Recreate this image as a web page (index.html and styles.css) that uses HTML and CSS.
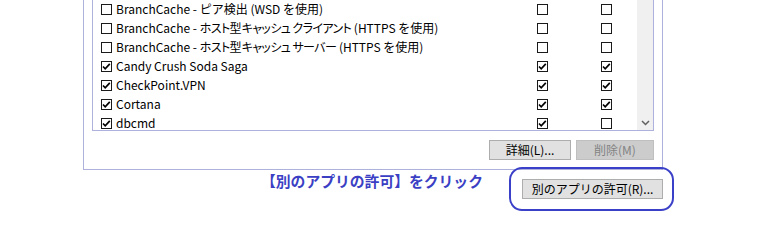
FILE: index.html
```html
<!DOCTYPE html>
<html lang="ja">
<head>
<meta charset="utf-8">
<link rel="stylesheet" href="styles.css">
</head>
<body>
<div class="page">
  <div class="panel">
    <div class="list">
      <div class="rows">
        <div class="row">
          <div class="name"><span class="cb"></span><span class="label">BranchCache - ピア検出 (WSD を使用)</span></div>
          <span class="cb"></span>
          <span class="cb"></span>
        </div>
        <div class="row">
          <div class="name"><span class="cb"></span><span class="label">BranchCache - <span class="kana">ホスト</span>型<span class="kana">キャッシュ クライアント</span> (HTTPS を使用)</span></div>
          <span class="cb"></span>
          <span class="cb"></span>
        </div>
        <div class="row">
          <div class="name"><span class="cb"></span><span class="label">BranchCache - <span class="kana">ホスト</span>型<span class="kana">キャッシュ サーバー</span> (HTTPS を使用)</span></div>
          <span class="cb"></span>
          <span class="cb"></span>
        </div>
        <div class="row">
          <div class="name"><span class="cb on"><svg viewBox="0 0 11 11"><path d="M2 5.5 L4.2 7.8 L8.8 2.8"/></svg></span><span class="label">Candy Crush Soda Saga</span></div>
          <span class="cb on"><svg viewBox="0 0 11 11"><path d="M2 5.5 L4.2 7.8 L8.8 2.8"/></svg></span>
          <span class="cb on"><svg viewBox="0 0 11 11"><path d="M2 5.5 L4.2 7.8 L8.8 2.8"/></svg></span>
        </div>
        <div class="row">
          <div class="name"><span class="cb on"><svg viewBox="0 0 11 11"><path d="M2 5.5 L4.2 7.8 L8.8 2.8"/></svg></span><span class="label">CheckPoint.VPN</span></div>
          <span class="cb on"><svg viewBox="0 0 11 11"><path d="M2 5.5 L4.2 7.8 L8.8 2.8"/></svg></span>
          <span class="cb on"><svg viewBox="0 0 11 11"><path d="M2 5.5 L4.2 7.8 L8.8 2.8"/></svg></span>
        </div>
        <div class="row">
          <div class="name"><span class="cb on"><svg viewBox="0 0 11 11"><path d="M2 5.5 L4.2 7.8 L8.8 2.8"/></svg></span><span class="label">Cortana</span></div>
          <span class="cb on"><svg viewBox="0 0 11 11"><path d="M2 5.5 L4.2 7.8 L8.8 2.8"/></svg></span>
          <span class="cb on"><svg viewBox="0 0 11 11"><path d="M2 5.5 L4.2 7.8 L8.8 2.8"/></svg></span>
        </div>
        <div class="row">
          <div class="name"><span class="cb on"><svg viewBox="0 0 11 11"><path d="M2 5.5 L4.2 7.8 L8.8 2.8"/></svg></span><span class="label">dbcmd</span></div>
          <span class="cb on"><svg viewBox="0 0 11 11"><path d="M2 5.5 L4.2 7.8 L8.8 2.8"/></svg></span>
          <span class="cb"></span>
        </div>
      </div>
      <div class="scrollbar">
        <svg class="chev" viewBox="0 0 9 6"><path d="M1 1 L4.5 4.5 L8 1"/></svg>
      </div>
    </div>
    <div class="buttons">
      <button class="btn detail">詳細(L)...</button>
      <button class="btn disabled">削除(M)</button>
    </div>
  </div>
  <div class="bottom">
    <div class="note">【別のアプリの許可】をクリック</div>
    <div class="allow-wrap">
      <button class="btn allow">別のアプリの許可(R)...</button>
      <div class="ring"></div>
    </div>
  </div>
</div>
</body>
</html>
```

FILE: styles.css
```css
* { box-sizing: border-box; }
html, body { margin: 0; padding: 0; background: #fff; }
body {
  font-family: "Noto Sans CJK JP", "Noto Sans", sans-serif;
  font-size: 12px;
  color: #000;
  width: 776px;
  height: 231px;
  overflow: hidden;
}
.page { padding-left: 83px; }
.panel {
  width: 580px;
  margin-top: -13px;
  border: 1px solid #adb1dc;
  padding: 11px 8px 9px 8px;
}
.list {
  display: flex;
  height: 132px;
  border: 1px solid #adb1dc;
  overflow: hidden;
}
.rows { flex: 1; }
.row {
  display: grid;
  grid-template-columns: 444px 64px 1fr;
  align-items: center;
  height: 19px;
}
.name {
  display: flex;
  align-items: center;
  padding-left: 8px;
  white-space: nowrap;
}
.label {
  margin-left: 4px;
  line-height: 19px;
  position: relative;
  top: -1px;
}
.kana {
  font-feature-settings: "palt";
  letter-spacing: -0.6px;
}
.cb {
  width: 11px;
  height: 11px;
  border: 1px solid #1a1a1a;
  background: #fff;
  display: block;
  position: relative;
}
.cb svg {
  position: absolute;
  left: -1px;
  top: -1px;
  width: 11px;
  height: 11px;
}
.cb svg path { fill: none; stroke: #000; stroke-width: 1.7; }
.scrollbar {
  width: 16px;
  background: #f0f0f0;
  display: flex;
  align-items: flex-end;
  justify-content: center;
  padding-bottom: 4px;
}
.chev { width: 9px; height: 6px; }
.chev path { fill: none; stroke: #606060; stroke-width: 1.5; }
.buttons {
  display: flex;
  justify-content: flex-end;
  gap: 5px;
  margin-top: 9px;
}
.btn {
  font-family: "Noto Sans CJK JP", "Noto Sans", sans-serif;
  font-size: 12px;
  height: 20px;
  padding: 0;
  line-height: 18px;
  background: #e1e1e1;
  border: 1px solid #adadad;
  color: #000;
}
.detail { width: 82px; }
.disabled { width: 78px; background: #cccccc; border-color: #bfbfbf; color: #838383; }
.bottom {
  display: flex;
  justify-content: space-between;
  width: 580px;
  padding-left: 178px;
  margin-top: 9px;
}
.note {
  font-size: 14.8px;
  font-weight: bold;
  color: #3b3fc4;
  margin-top: -8px;
  line-height: 20px;
}
.allow-wrap { position: relative; }
.allow { width: 141px; display: block; }
.ring {
  position: absolute;
  left: -13px;
  top: -12px;
  width: 165px;
  height: 44px;
  border: 2px solid #3b40c8;
  border-radius: 13px;
}
```
